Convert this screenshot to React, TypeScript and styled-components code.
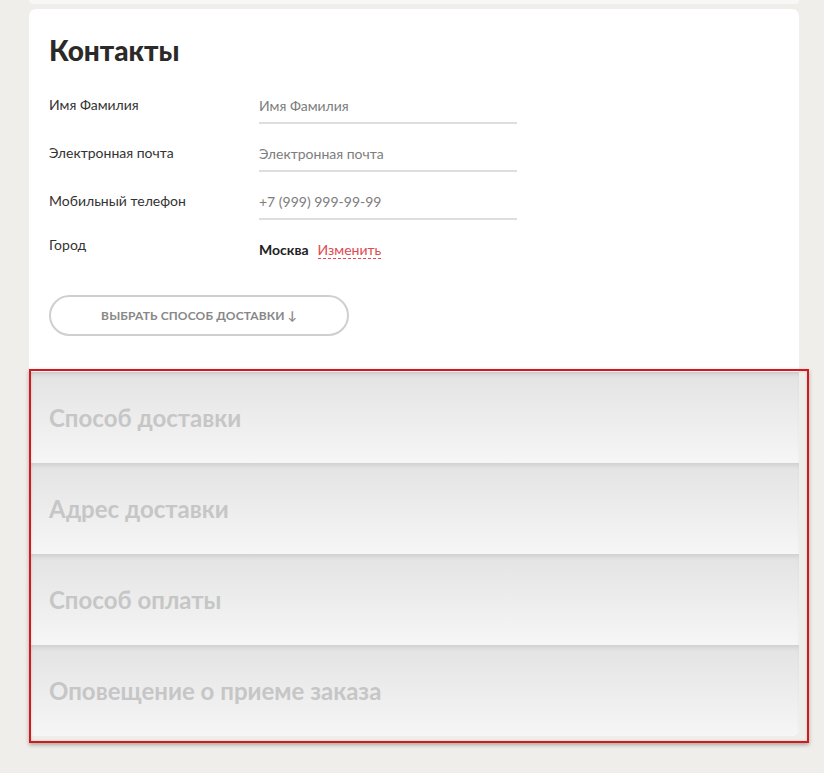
import styled, { createGlobalStyle } from 'styled-components';

const GlobalStyle = createGlobalStyle`
  body {
    margin: 0;
    background: #efeeea;
    font-family: Lato, "Noto Sans", "Liberation Sans", sans-serif;
  }
`;

const Page = styled.div`
  position: relative;
  width: 824px;
  height: 773px;
  padding-left: 29px;
  box-sizing: border-box;
  overflow: hidden;
`;

const PrevCardEdge = styled.div`
  width: 770px;
  height: 4px;
  background: #f7f7f5;
  border-radius: 0 0 6px 6px;
`;

const Card = styled.section`
  margin-top: 5px;
  width: 770px;
  background: #fff;
  border-radius: 7px;
  overflow: hidden;
`;

const Contacts = styled.div`
  padding: 25px 20px 36px;
`;

const Title = styled.h2`
  margin: 0 0 21px;
  font-size: 28px;
  line-height: 33px;
  font-weight: 900;
  color: #2b2a28;
`;

const Row = styled.div`
  display: grid;
  grid-template-columns: 210px 258px;
  height: 48px;
`;

const Label = styled.div<{ $top?: number }>`
  padding-top: ${p => p.$top ?? 7}px;
  font-size: 14px;
  line-height: 20px;
  color: #333;
`;

const Field = styled.div`
  height: 34px;
  border-bottom: 2px solid #dedede;
  display: flex;
  align-items: center;
  font-size: 14px;
  color: #7d7d7d;
`;

const CityValue = styled.div`
  padding-top: 8px;
  font-size: 14px;
  line-height: 20px;
  white-space: nowrap;
`;

const City = styled.b`
  font-weight: 700;
  color: #222;
  margin-right: 9px;
`;

const ChangeLink = styled.span`
  color: #e04a4f;
  border-bottom: 1px dashed #e04a4f;
`;

const OutlineButton = styled.button`
  margin-top: 15px;
  width: 300px;
  height: 41px;
  border: 2px solid #cfcfcf;
  border-radius: 21px;
  background: #fff;
  font-family: inherit;
  font-size: 12px;
  font-weight: 700;
  color: #888;
  letter-spacing: 0.15px;
  cursor: pointer;
`;

const Step = styled.div`
  height: 91px;
  display: flex;
  align-items: center;
  padding-left: 20px;
  background: linear-gradient(#e3e3e3, #f6f6f6);
  box-shadow: inset 0 4px 5px -2px rgba(0, 0, 0, 0.1);
  font-size: 24px;
  font-weight: 700;
  color: #c6c6c6;
`;

const Highlight = styled.div`
  position: absolute;
  left: 29px;
  top: 369px;
  width: 780px;
  height: 374px;
  box-sizing: border-box;
  border: 2px solid #d3191e;
  box-shadow: 0 2px 4px rgba(0, 0, 0, 0.3), inset 0 0 3px rgba(0, 0, 0, 0.15);
  pointer-events: none;
`;

const steps = ['Способ доставки', 'Адрес доставки', 'Способ оплаты', 'Оповещение о приеме заказа'];

const fields = [
  { label: 'Имя Фамилия', placeholder: 'Имя Фамилия' },
  { label: 'Электронная почта', placeholder: 'Электронная почта' },
  { label: 'Мобильный телефон', placeholder: '+7 (999) 999-99-99' },
];

export default function App() {
  return (
    <Page>
      <GlobalStyle />
      <PrevCardEdge />
      <Card>
        <Contacts>
          <Title>Контакты</Title>
          {fields.map(f => (
            <Row key={f.label}>
              <Label>{f.label}</Label>
              <Field>{f.placeholder}</Field>
            </Row>
          ))}
          <Row>
            <Label $top={3}>Город</Label>
            <CityValue>
              <City>Москва</City>
              <ChangeLink>Изменить</ChangeLink>
            </CityValue>
          </Row>
          <OutlineButton>ВЫБРАТЬ СПОСОБ ДОСТАВКИ ↓</OutlineButton>
        </Contacts>
        {steps.map(s => (
          <Step key={s}>{s}</Step>
        ))}
      </Card>
      <Highlight />
    </Page>
  );
}
